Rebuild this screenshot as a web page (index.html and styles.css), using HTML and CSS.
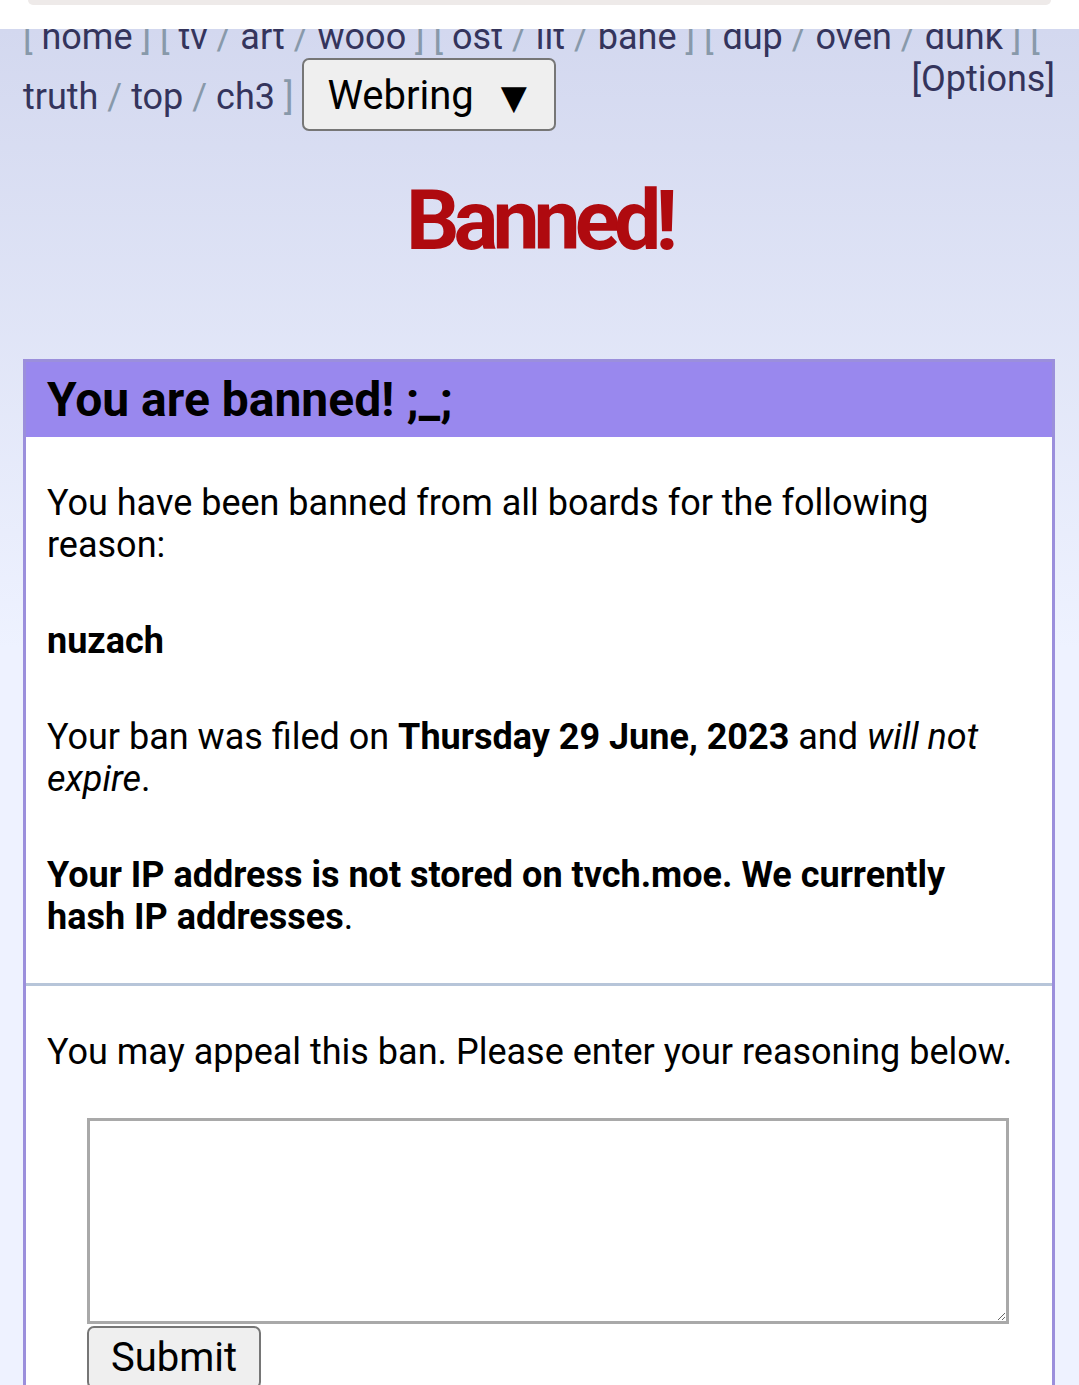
FILE: index.html
```html
<!DOCTYPE html>
<html lang="en">
<head>
    <meta charset="UTF-8">
    <title>Banned!</title>
    <link rel="stylesheet" href="styles.css">
</head>
<body>
<div class="chrome"><div class="chrome-bar"></div></div>
<div class="page">
    <div class="boardlist">
        <span class="sub">[ <a href="#">home</a> ]</span>
        <span class="sub">[ <a href="#">tv</a> / <a href="#">art</a> / <a href="#">wooo</a> ]</span>
        <span class="sub">[ <a href="#">ost</a> / <a href="#">lit</a> / <a href="#">bane</a> ]</span>
        <span class="sub">[ <a href="#">dup</a> / <a href="#">oven</a> / <a href="#">dunk</a> ]</span>
        <span class="sub">[ <a href="#">truth</a> / <a href="#">top</a> / <a href="#">ch3</a> ]</span>
        <span class="webring">Webring<span class="arrow">&#9660;</span></span>
        <a href="#" class="options">[Options]</a>
    </div>

    <h1 class="title">Banned!</h1>

    <div class="ban">
        <h2>You are banned! ;_;</h2>
        <p>You have been banned from all boards for the following reason:</p>
        <p class="reason">nuzach</p>
        <p>Your ban was filed on <strong>Thursday 29 June, 2023</strong> and <em>will not expire</em>.</p>
        <p><strong>Your IP address is not stored on tvch.moe. We currently hash IP addresses</strong>.</p>
        <hr>
        <p>You may appeal this ban. Please enter your reasoning below.</p>
        <form class="appeal">
            <textarea name="appeal"></textarea>
            <input type="submit" value="Submit">
        </form>
    </div>
</div>
</body>
</html>
```

FILE: styles.css
```css
*{
    box-sizing: border-box;
}
body{
    margin: 0;
    font-family: Roboto, "Noto Sans", sans-serif;
    background: #eef2ff;
}
.chrome{
    height: 29px;
    background: #fff;
}
.chrome-bar{
    height: 5px;
    margin: 0 28px;
    background: #eeeae9;
    border-radius: 0 0 26px 26px;
}
.page{
    overflow: hidden;
    padding: 0 24px 0 23px;
    background: #eef2ff linear-gradient(#d3d8ef, #eef2ff) no-repeat;
    background-size: 100% 620px;
}
.boardlist{
    margin-top: -13.5px;
    font-size: 36px;
    color: #89a;
}
.boardlist a{
    color: #34345c;
    text-decoration: none;
}
.boardlist .options{
    float: right;
}
.webring{
    display: inline-block;
    font-size: 40px;
    line-height: 47px;
    color: #000;
    background: #efefef;
    border: 2px solid #767676;
    border-radius: 7px;
    padding: 12px 27px 8px 23px;
}
.webring .arrow{
    margin-left: 27px;
    font-family: "DejaVu Sans", sans-serif;
    font-size: 34px;
}
.title{
    margin: 40px 0 0;
    text-align: center;
    font-size: 84px;
    letter-spacing: -6px;
    font-weight: bold;
    color: #af0a0f;
}
.ban{
    margin-top: 89px;
    background: #fff;
    border: 3px solid #9b8fdc;
}
.ban h2{
    margin: 0;
    padding: 9px 21px;
    font-size: 48px;
    background: #98e;
    color: #000;
}
.ban p{
    margin: 36px 0;
    padding: 9px 21px;
    font-size: 36px;
    color: #000;
}
.ban .reason{
    font-weight: bold;
}
.ban hr{
    height: 0;
    margin: 36px 0;
    border: 0;
    border-top: 3px solid #b7c5d9;
}
.appeal{
    margin: 0 0 27px 61px;
}
.appeal textarea{
    display: block;
    width: 922px;
    height: 206px;
    margin: 0 0 2px;
    border: 3px solid #a9a9a9;
    background: #fff;
}
.appeal input{
    font-family: Roboto, "Noto Sans", sans-serif;
    font-size: 40px;
    padding: 6px 22px;
    color: #000;
    background: #efefef;
    border: 2px solid #767676;
    border-radius: 7px;
}
```
